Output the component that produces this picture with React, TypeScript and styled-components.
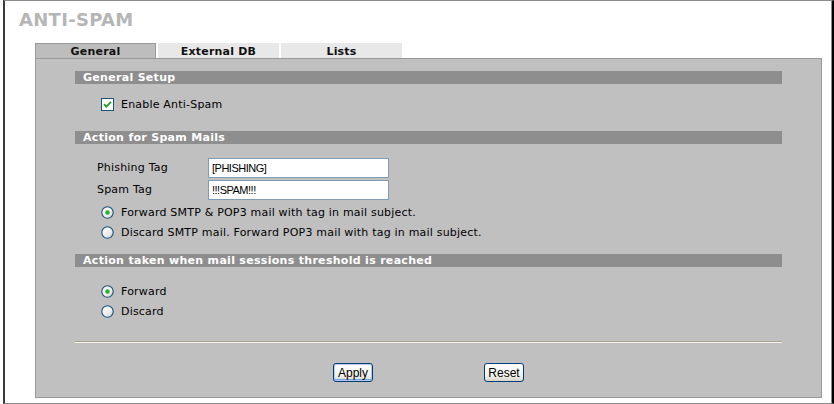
import React from 'react';
import styled, { createGlobalStyle } from 'styled-components';

const GlobalStyle = createGlobalStyle`
    html, body {
        margin: 0;
        padding: 0;
        background: #ffffff;
    }
    body {
        font-family: "DejaVu Sans", Verdana, sans-serif;
        font-size: 11px;
        color: #000;
    }
`;

const Frame = styled.div`
    margin-left: 3px;
    width: 831px;
    height: 404px;
    box-sizing: border-box;
    border-left: 2px solid #3a3a3a;
    border-top: 1px solid #8a8a8a;
    border-right: 2px solid #000;
    border-bottom: 1px solid #8a8a8a;
    box-shadow: inset -1px 0 0 #8a8a8a;
    background: #fff;
`;

const Title = styled.div`
    padding: 8px 0 0 14px;
    margin-bottom: 12px;
    font-size: 18px;
    line-height: 22px;
    font-weight: bold;
    letter-spacing: 0.3px;
    color: #b6b6b6;
`;

const TabRow = styled.div`
    display: flex;
    gap: 2px;
    margin-left: 30px;
`;

const Tab = styled.div<{ active?: boolean }>`
    width: 121px;
    height: 15px;
    box-sizing: border-box;
    line-height: 15px;
    text-align: center;
    font-weight: bold;
    font-size: 11px;
    letter-spacing: 0.2px;
    color: #111;
    background: ${({ active }) => (active ? '#bdbdbd' : '#e8e8e8')};
    border-top: 1px solid ${({ active }) => (active ? '#999' : '#e8e8e8')};
    border-left: 1px solid ${({ active }) => (active ? '#999' : '#e8e8e8')};
    border-right: 1px solid ${({ active }) => (active ? '#999' : '#e8e8e8')};
`;

const Panel = styled.div`
    margin-left: 30px;
    width: 787px;
    box-sizing: border-box;
    border: 1px solid #999;
    background: #c0c0c0;
    padding: 12px 39px 15px;
`;

const SectionHeader = styled.div`
    height: 13px;
    line-height: 13px;
    background: #8e8e8e;
    color: #fff;
    font-weight: bold;
    font-size: 11px;
    padding-left: 8px;
    letter-spacing: 0.3px;
`;

const SectionBody = styled.div<{ top: number; bottom: number }>`
    padding: ${({ top, bottom }) => `${top}px 0 ${bottom}px`};
`;

const OptionRow = styled.label`
    display: flex;
    align-items: center;
    gap: 7px;
    height: 20px;
    padding-left: 26px;
    padding-top: 1px;
    box-sizing: border-box;
    letter-spacing: 0.2px;
`;

const FieldRow = styled.div`
    display: flex;
    align-items: flex-start;
    height: 22px;
    padding-left: 22px;
`;

const FieldLabel = styled.div`
    width: 111px;
    line-height: 20px;
    letter-spacing: 0.2px;
`;

const TextInput = styled.div`
    width: 181px;
    height: 20px;
    box-sizing: border-box;
    border: 1px solid #7f9db9;
    background: #fff;
    font-family: "Liberation Sans", Arial, sans-serif;
    font-size: 11px;
    letter-spacing: -0.5px;
    line-height: 18px;
    padding-left: 3px;
`;

const Separator = styled.div`
    height: 0;
    border-top: 1px solid #a9a48e;
    border-bottom: 1px solid #f6f4e8;
`;

const ButtonRow = styled.div`
    display: flex;
    justify-content: center;
    gap: 111px;
    margin-top: 20px;
`;

const Button = styled.button<{ primary?: boolean }>`
    width: 40px;
    height: 19px;
    padding: 0;
    box-sizing: border-box;
    font-family: "Liberation Sans", Arial, sans-serif;
    font-size: 12px;
    color: #000;
    border: 1px solid #003c74;
    border-radius: 3px;
    background: linear-gradient(#ffffff, #f1f0eb 70%, #d9d4c8);
    box-shadow: ${({ primary }) =>
        primary ? 'inset 0 0 0 1px #b3ccf4, inset 0 -2px 0 #7aa0e6, inset 1px 0 0 #cfe0fb' : 'none'};
`;

const CheckBox: React.FC = () => (
    <svg width="13" height="13" viewBox="0 0 13 13">
        <rect x="0.5" y="0.5" width="12" height="12" fill="#fff" stroke="#1c5180" />
        <path d="M3 6.2 L5.3 8.6 L10 3.8" fill="none" stroke="#21a121" strokeWidth="1.8" />
    </svg>
);

const Radio: React.FC<{ checked?: boolean }> = ({ checked }) => (
    <svg width="13" height="13" viewBox="0 0 13 13">
        <defs>
            <linearGradient id="rg" x1="0" y1="0" x2="1" y2="1">
                <stop offset="0" stopColor="#ffffff" />
                <stop offset="0.6" stopColor="#ececec" />
                <stop offset="1" stopColor="#c9c9c4" />
            </linearGradient>
        </defs>
        <circle cx="6.5" cy="6.5" r="5.7" fill="url(#rg)" stroke="#1c5180" strokeWidth="1.1" />
        {checked && <circle cx="6.5" cy="6.5" r="2.2" fill="#27b227" />}
    </svg>
);

const App: React.FC = () => {
    return (
        <>
            <GlobalStyle />
            <Frame>
                <Title>ANTI-SPAM</Title>
                <TabRow>
                    <Tab active>General</Tab>
                    <Tab>External DB</Tab>
                    <Tab>Lists</Tab>
                </TabRow>
                <Panel>
                    <SectionHeader>General Setup</SectionHeader>
                    <SectionBody top={10} bottom={17}>
                        <OptionRow>
                            <CheckBox />
                            Enable Anti-Spam
                        </OptionRow>
                    </SectionBody>

                    <SectionHeader>Action for Spam Mails</SectionHeader>
                    <SectionBody top={14} bottom={12}>
                        <FieldRow>
                            <FieldLabel>Phishing Tag</FieldLabel>
                            <TextInput>[PHISHING]</TextInput>
                        </FieldRow>
                        <FieldRow>
                            <FieldLabel>Spam Tag</FieldLabel>
                            <TextInput>!!!SPAM!!!</TextInput>
                        </FieldRow>
                        <OptionRow>
                            <Radio checked />
                            Forward SMTP &amp; POP3 mail with tag in mail subject.
                        </OptionRow>
                        <OptionRow>
                            <Radio />
                            Discard SMTP mail. Forward POP3 mail with tag in mail subject.
                        </OptionRow>
                    </SectionBody>

                    <SectionHeader>Action taken when mail sessions threshold is reached</SectionHeader>
                    <SectionBody top={14} bottom={20}>
                        <OptionRow>
                            <Radio checked />
                            Forward
                        </OptionRow>
                        <OptionRow>
                            <Radio />
                            Discard
                        </OptionRow>
                    </SectionBody>

                    <Separator />
                    <ButtonRow>
                        <Button primary>Apply</Button>
                        <Button>Reset</Button>
                    </ButtonRow>
                </Panel>
            </Frame>
        </>
    );
};

export default App;
